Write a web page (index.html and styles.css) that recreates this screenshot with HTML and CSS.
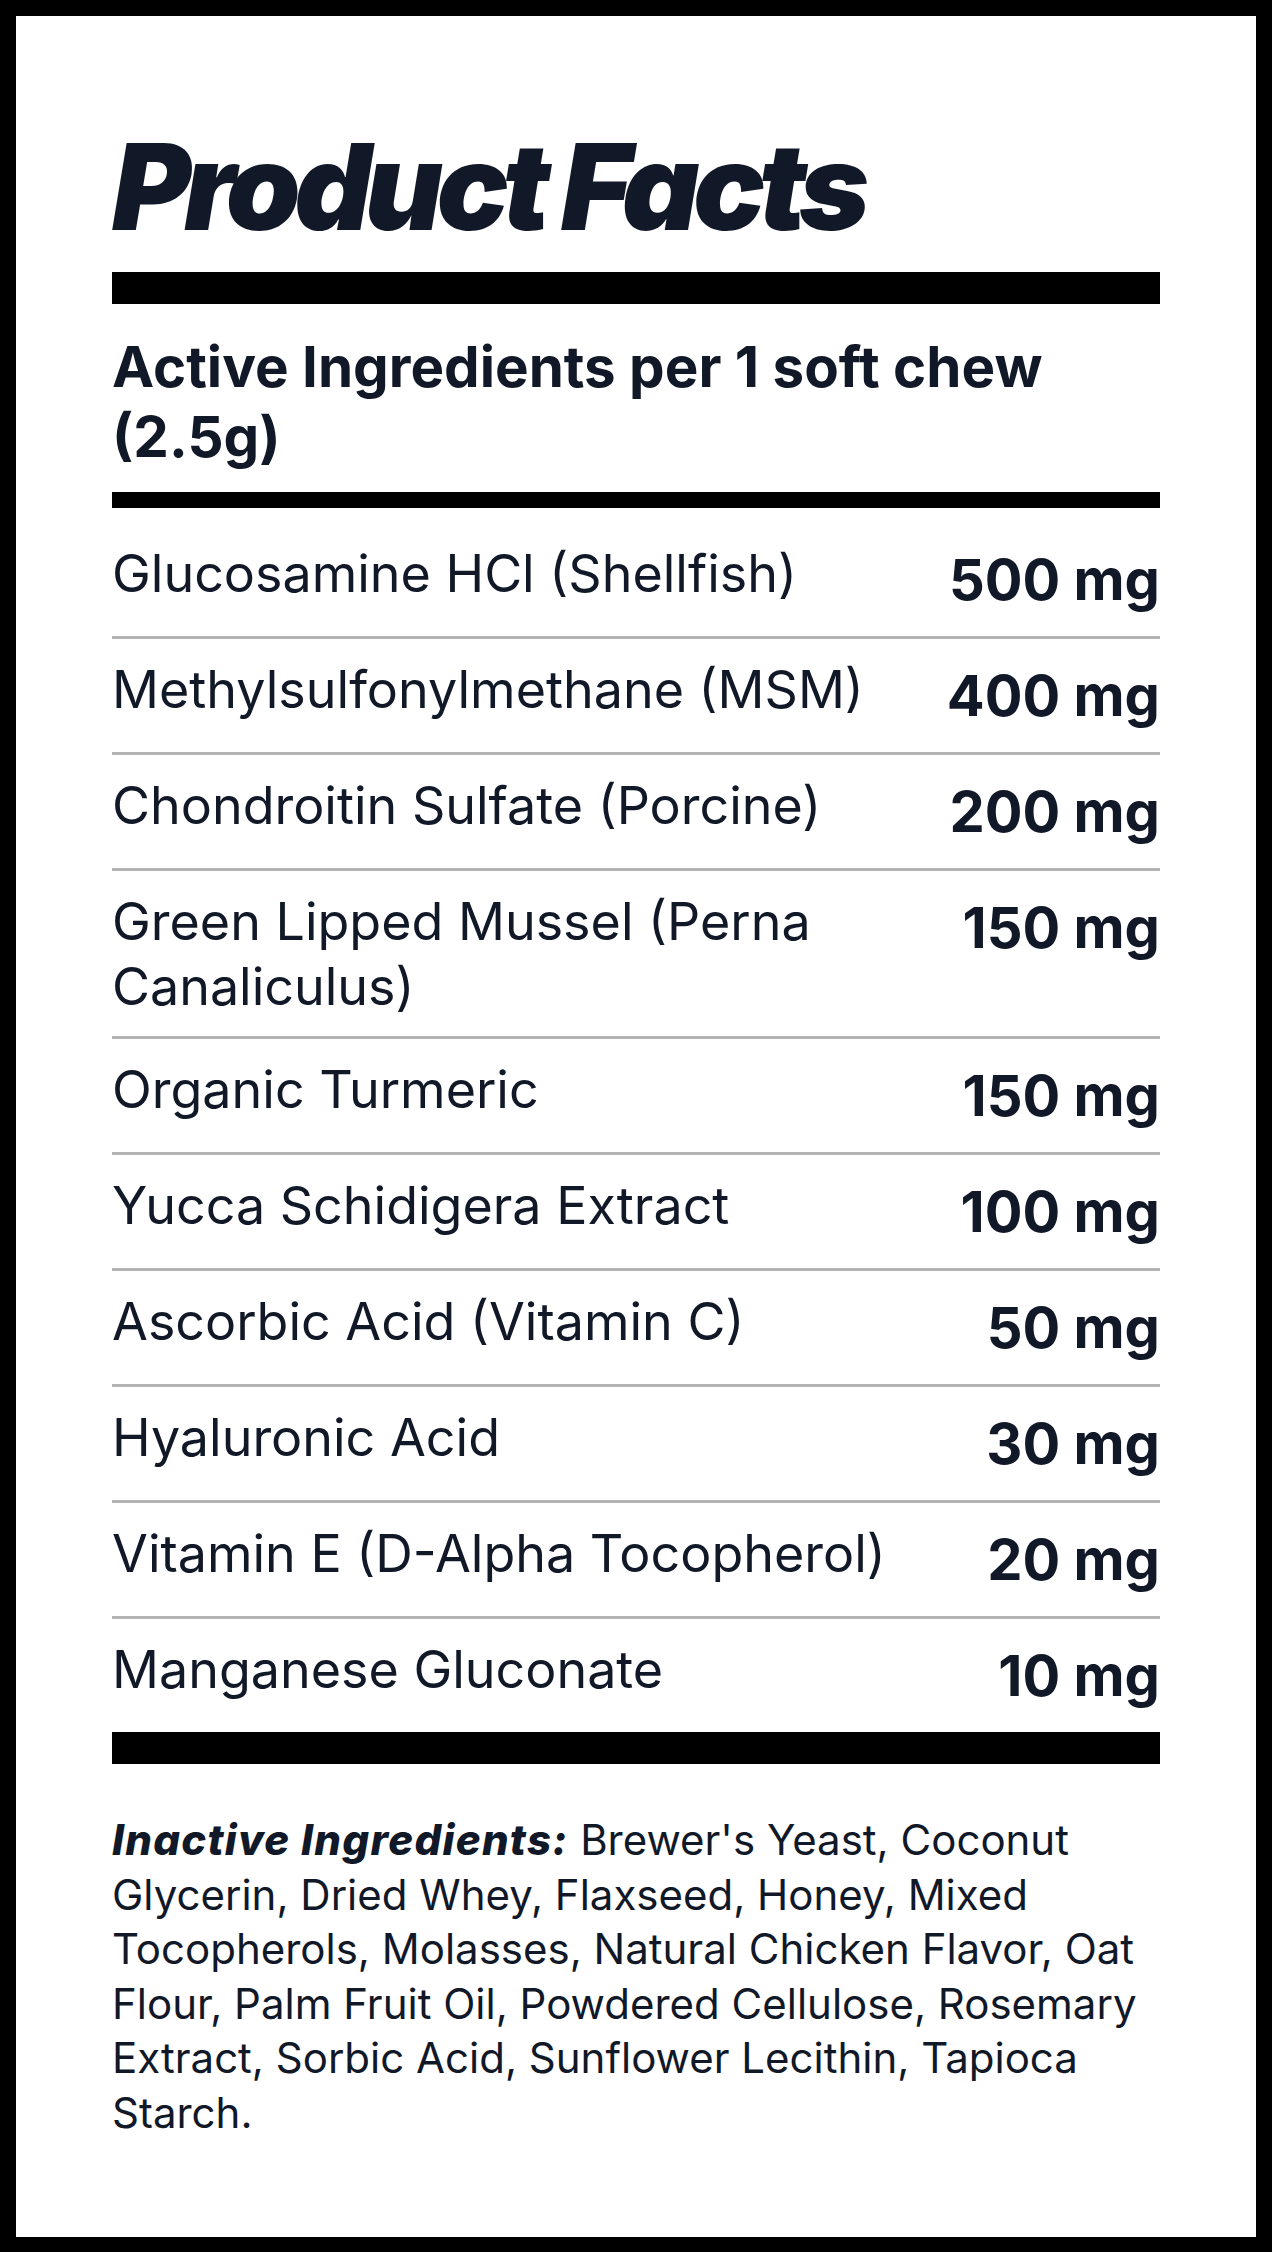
FILE: index.html
```html
<!DOCTYPE html>
<html>
<head>
    <title>Product Facts</title>
    <link rel="stylesheet" href="styles.css">
</head>
<body>
    <div class="label">
        <h1>Product Facts</h1>
        <div class="bar bar-thick"></div>

        <h2>Active Ingredients per 1 soft chew (2.5g)</h2>
        <div class="bar bar-thin"></div>

        <div class="rows">
            <div class="row">
                <span class="name">Glucosamine HCl (Shellfish)</span>
                <span class="amount">500 mg</span>
            </div>
            <div class="row">
                <span class="name">Methylsulfonylmethane (MSM)</span>
                <span class="amount">400 mg</span>
            </div>
            <div class="row">
                <span class="name">Chondroitin Sulfate (Porcine)</span>
                <span class="amount">200 mg</span>
            </div>
            <div class="row">
                <span class="name">Green Lipped Mussel (Perna Canaliculus)</span>
                <span class="amount">150 mg</span>
            </div>
            <div class="row">
                <span class="name">Organic Turmeric</span>
                <span class="amount">150 mg</span>
            </div>
            <div class="row">
                <span class="name">Yucca Schidigera Extract</span>
                <span class="amount">100 mg</span>
            </div>
            <div class="row">
                <span class="name">Ascorbic Acid (Vitamin C)</span>
                <span class="amount">50 mg</span>
            </div>
            <div class="row">
                <span class="name">Hyaluronic Acid</span>
                <span class="amount">30 mg</span>
            </div>
            <div class="row">
                <span class="name">Vitamin E (D-Alpha Tocopherol)</span>
                <span class="amount">20 mg</span>
            </div>
            <div class="row">
                <span class="name">Manganese Gluconate</span>
                <span class="amount">10 mg</span>
            </div>
        </div>
        <div class="bar bar-thick"></div>

        <p class="inactive">
            <strong>Inactive Ingredients:</strong> Brewer's Yeast, Coconut Glycerin, Dried Whey, Flaxseed, Honey, Mixed Tocopherols, Molasses, Natural Chicken Flavor, Oat Flour, Palm Fruit Oil, Powdered Cellulose, Rosemary Extract, Sorbic Acid, Sunflower Lecithin, Tapioca Starch.
        </p>
    </div>
</body>
</html>
```

FILE: styles.css
```css
body {
    margin: 0;
    font-family: Inter, "Liberation Sans", sans-serif;
    color: #111827;
    background-color: #000;
}
.label {
    background-color: #fff;
    border: 16px solid #000;
    padding: 96px;
    box-sizing: border-box;
    min-height: 100vh;
}
h1 {
    margin: 0 0 10px;
    font-size: 120px;
    line-height: 150px;
    font-weight: 900;
    font-style: italic;
    letter-spacing: -0.055em;
}
.bar {
    background-color: #000;
}
.bar-thick {
    height: 32px;
}
.bar-thin {
    height: 16px;
}
h2 {
    margin: 28px 0 20px;
    font-size: 56.5px;
    line-height: 70px;
    font-weight: 700;
}
.rows {
    margin-top: 15px;
}
.row {
    display: flex;
    justify-content: space-between;
    align-items: flex-start;
    gap: 40px;
    padding: 17.5px 0;
    border-bottom: 3px solid #b3b3b3;
}
.row:last-child {
    border-bottom: none;
}
.name {
    font-size: 52px;
    line-height: 65px;
}
.amount {
    flex-shrink: 0;
    font-size: 56px;
    line-height: 78px;
    font-weight: 700;
}
.inactive {
    margin: 49px 0 0;
    font-size: 42px;
    line-height: 54.6px;
}
.inactive strong {
    font-weight: 800;
    font-style: italic;
    letter-spacing: 0.03em;
}
```
